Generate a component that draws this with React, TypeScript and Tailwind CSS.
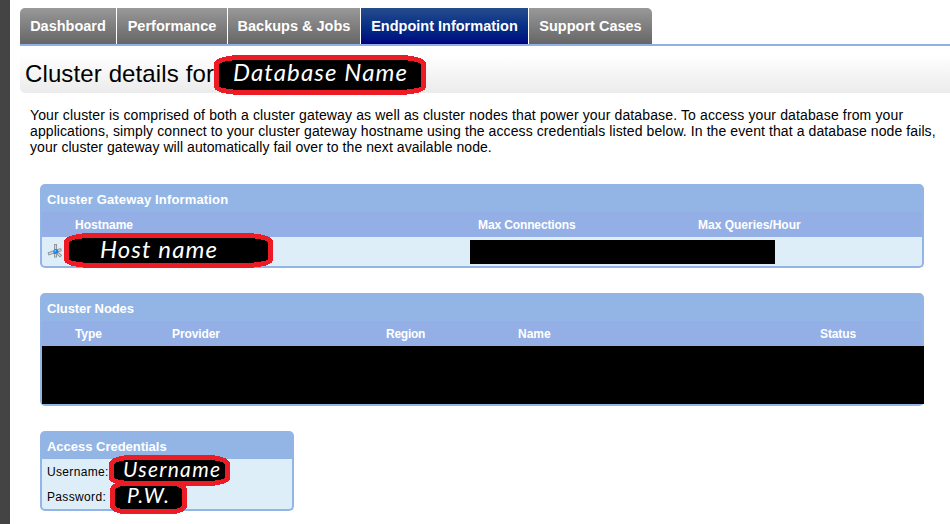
import type { ReactNode } from 'react';

const sans = "font-['Liberation_Sans',Arial,sans-serif]";

type MarkerProps = { w: number; h: number; x: number; y: number; len: number; size: number; place: string; children: string };

// Black redaction strip with a thick red outline and a script label.
function Marker({ w, h, x, y, len, size, place, children }: MarkerProps) {
  const e = 2.5;
  const k = Math.min(24, w * 0.16);
  const d = `M${e} 9 Q${e + 1} 4 ${k} ${e} H${w - k} Q${w - e - 1} 4 ${w - e} 9 V${h - 8} Q${w - e - 1} ${h - 4} ${w - k} ${h - e} H${k} Q${e + 1} ${h - 4} ${e} ${h - 8} Z`;
  return (
    <svg width={w} height={h} className={`absolute z-10 ${place}`}>
      <path d={d} fill="#000" stroke="#ed1c24" strokeWidth="5" strokeLinejoin="round" shapeRendering="crispEdges" />
      <text
        x={x}
        y={y}
        textLength={len}
        lengthAdjust="spacing"
        fontSize={size}
        fill="#fff"
        className="italic font-['Lato',cursive]"
      >
        {children}
      </text>
    </svg>
  );
}

function NodeIcon() {
  return (
    <svg width="16" height="16" viewBox="0 0 16 16" className="mb-[2px] ml-[5px]">
      <g stroke="#858b90" strokeWidth="3" strokeLinecap="square">
        <path d="M8.5 2.5V13M2.5 10.5L8 8.5M8 8.5L13 7M9 9L13 12.5" />
      </g>
      <g stroke="#d2d6d9" strokeWidth="1.4" strokeLinecap="square">
        <path d="M8.5 2.5V13M2.5 10.5L8 8.5M8 8.5L13 7M9 9L13 12.5" />
      </g>
      <circle cx="8.8" cy="8.6" r="2.5" fill="#1c86e8" />
      <circle cx="8.2" cy="7.8" r="0.9" fill="#75c8ff" />
    </svg>
  );
}

type PanelProps = { title: string; titleClass: string; className: string; children: ReactNode };

function Panel({ title, titleClass, className, children }: PanelProps) {
  return (
    <section className={`relative flex flex-col rounded-[5px] border-2 border-t-0 border-[#93b5e6] bg-[#93b5e6] ${className}`}>
      <h2 className={`h-7 shrink-0 pl-[5px] pt-[1px] text-[13px] leading-[29px] font-bold text-white ${titleClass}`}>{title}</h2>
      {children}
    </section>
  );
}

const head = 'flex h-[25px] shrink-0 bg-[#93afe6] pl-[33px] text-[12px] leading-[26px] font-bold text-white';

const tabs = [
  { label: 'Dashboard', cls: 'w-24 rounded-tl-[5px] from-[#999] to-[#666]' },
  { label: 'Performance', cls: 'w-[110px] from-[#999] to-[#666]' },
  { label: 'Backups & Jobs', cls: 'w-[132px] from-[#999] to-[#666]' },
  { label: 'Endpoint Information', cls: 'w-[167px] from-[#264b8c] to-[#000080]' },
  { label: 'Support Cases', cls: 'w-[123px] rounded-tr-[5px] from-[#999] to-[#666]' },
];

export default function App() {
  return (
    <div className={`flex h-[524px] w-[950px] overflow-hidden bg-white text-black ${sans}`}>
      <div className="w-[10px] shrink-0 bg-[#444]" />
      <main className="flex flex-1 flex-col pl-[10px] pt-2">
        <nav className="flex h-[38px] gap-px border-b-2 border-[#93afe6]">
          {tabs.map((t) => (
            <a key={t.label} className={`flex h-9 items-center justify-center bg-linear-to-b pt-px text-[14.5px] font-bold whitespace-nowrap text-white ${t.cls}`}>
              {t.label}
            </a>
          ))}
        </nav>

        <header className="relative mt-[9px] h-[38px] rounded-l-[5px] bg-linear-to-b from-white to-[#ebebeb] pl-[5px]">
          <h1 className="text-[24px] leading-[38px] tracking-[0.12px] whitespace-nowrap">Cluster details for</h1>
          <Marker w={212} h={40} x={19} y={26} len={174} size={24} place="left-[194px] top-0">Database Name</Marker>
        </header>

        <p className="mt-[14px] ml-[10px] flex flex-col text-[14px] leading-4 whitespace-nowrap">
          <span className="tracking-[0.132px]">
            Your cluster is comprised of both a cluster gateway as well as cluster nodes that power your database. To access your database from your
          </span>
          <span className="tracking-[0.09px]">
            applications, simply connect to your cluster gateway hostname using the access credentials listed below. In the event that a database node fails,
          </span>
          <span className="tracking-[0.055px]">your cluster gateway will automatically fail over to the next available node.</span>
        </p>

        <div className="mt-[29px] ml-5 flex flex-col">
          <Panel title="Cluster Gateway Information" titleClass="tracking-[0.16px]" className="h-[84px] w-[884px]">
            <div className={head}>
              <span className="w-[403px]">Hostname</span>
              <span className="w-[220px] tracking-[-0.12px]">Max Connections</span>
              <span>Max Queries/Hour</span>
            </div>
            <div className="flex flex-1 items-center rounded-b-[3px] bg-[#deeef9]">
              <NodeIcon />
              <div className="ml-[407px] h-6 w-[305px] bg-black" />
            </div>
            <Marker w={209} h={35} x={36} y={25} len={117} size={24} place="left-[22px] top-[49px]">Host name</Marker>
          </Panel>

          <Panel title="Cluster Nodes" titleClass="tracking-[-0.1px]" className="mt-[25px] h-[113px] w-[884px]">
            <div className={head}>
              <span className="w-[97px] tracking-[-0.1px]">Type</span>
              <span className="w-[214px] tracking-[-0.1px]">Provider</span>
              <span className="w-[132px] tracking-[-0.25px]">Region</span>
              <span className="w-[302px]">Name</span>
              <span className="tracking-[-0.1px]">Status</span>
            </div>
            <div className="-mr-0.5 flex-1 bg-black" />
          </Panel>

          <Panel title="Access Credentials" titleClass="tracking-[-0.02px]" className="mt-[25px] h-20 w-[254px]">
            <div className="flex-1 rounded-b-[3px] bg-[#deeef9] pl-[5px] text-[12px] leading-[25px] tracking-[0.34px]">
              <div className="h-[25px] pt-px">Username:</div>
              <div className="h-[25px] pt-px">Password:</div>
            </div>
            <Marker w={121} h={31} x={14} y={22} len={97} size={21} place="left-[67px] top-6">Username</Marker>
            <Marker w={77} h={33} x={17} y={22} len={42} size={21} place="left-[68px] top-[50px]">P.W.</Marker>
          </Panel>
        </div>
      </main>
    </div>
  );
}
